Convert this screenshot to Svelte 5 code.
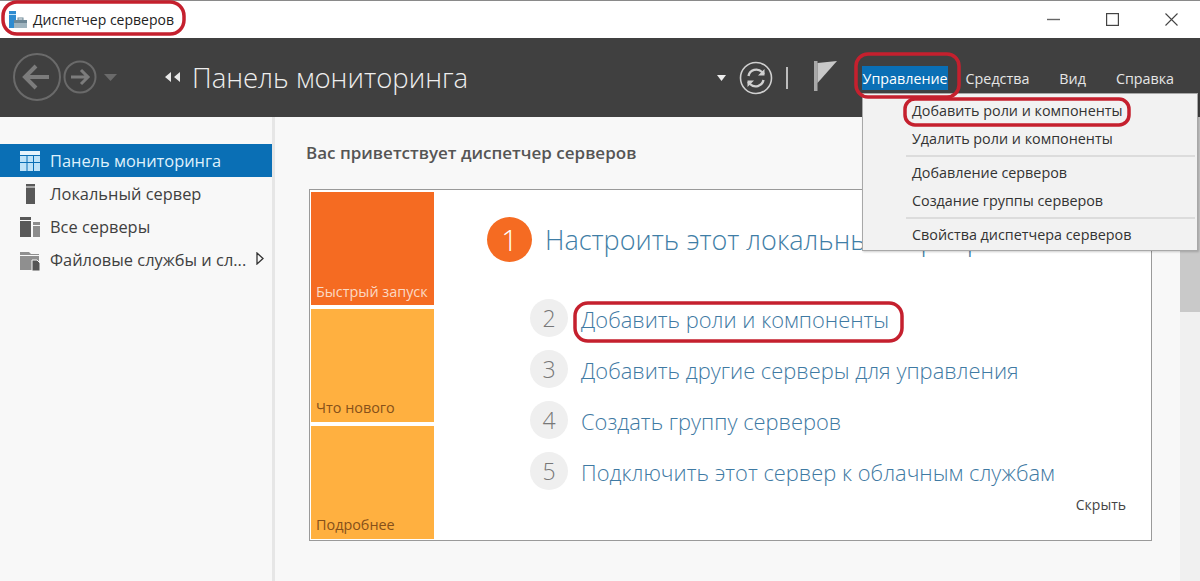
<script>
  const nav = [
    { label: 'Панель мониторинга', icon: 'dash', active: true },
    { label: 'Локальный сервер', icon: 'one' },
    { label: 'Все серверы', icon: 'all' },
    { label: 'Файловые службы и сл...', icon: 'files', more: true }
  ];
  const steps = [
    { n: 2, text: 'Добавить роли и компоненты' },
    { n: 3, text: 'Добавить другие серверы для управления' },
    { n: 4, text: 'Создать группу серверов' },
    { n: 5, text: 'Подключить этот сервер к облачным службам' }
  ];
  const menus = ['Управление', 'Средства', 'Вид', 'Справка'];
</script>

<div class="window">
  <div class="titlebar">
    <svg class="app-icon" width="20" height="20" viewBox="0 0 20 20">
      <rect x="1" y="1" width="7" height="17" fill="#2e8bd0" />
      <rect x="1" y="4" width="7" height="1" fill="#bfe0f5" />
      <rect x="6" y="10" width="13" height="8" fill="#9fb4bf" />
      <rect x="6" y="10" width="13" height="3" fill="#6d8796" />
      <rect x="10" y="8" width="5" height="2" fill="none" stroke="#6d8796" />
    </svg>
    <span class="app-name">Диспетчер серверов</span>
    <div class="win-controls">
      <svg width="13" height="13" viewBox="0 0 13 13"><path d="M0 6.500h13" stroke="#666" stroke-width="1.400" /></svg>
      <svg width="13" height="13" viewBox="0 0 13 13"><rect x="0.600" y="0.600" width="11.800" height="11.800" fill="none" stroke="#444" stroke-width="1.200" /></svg>
      <svg width="13" height="13" viewBox="0 0 13 13"><path d="M0.500 0.500l12 12M12.500 0.500l-12 12" stroke="#444" stroke-width="1.100" /></svg>
    </div>
  </div>

  <header class="toolbar">
    <div class="history">
      <svg width="110" height="50" viewBox="0 0 110 50">
        <circle cx="24" cy="25" r="23" fill="none" stroke="#6a6a6a" stroke-width="2" />
        <path d="M36 25H13M23 14L12 25l11 11" fill="none" stroke="#7c7c7c" stroke-width="4" />
        <circle cx="67" cy="25" r="15.500" fill="none" stroke="#6a6a6a" stroke-width="2" />
        <path d="M58 25h17M68 18l7 7-7 7" fill="none" stroke="#7c7c7c" stroke-width="3" />
        <path d="M91 22h13l-6.500 7z" fill="#6a6a6a" />
      </svg>
    </div>
    <svg class="collapse" width="16" height="10" viewBox="0 0 16 10">
      <path d="M0 5l6-5v10zM9 5l6-5v10z" fill="#e8e8e8" />
    </svg>
    <h1>Панель мониторинга</h1>

    <div class="tools">
      <svg class="drop" width="9" height="6" viewBox="0 0 9 6"><path d="M0 0h9L4.500 6z" fill="#eee" /></svg>
      <svg class="refresh" width="34" height="34" viewBox="0 0 34 34">
        <circle cx="17" cy="17" r="15.500" fill="none" stroke="#d0d0d0" stroke-width="1.600" />
        <path d="M9.500 15a8 8 0 0 1 13.500-4l2 2M24.500 19a8 8 0 0 1-13.500 4l-2-2" fill="none" stroke="#d0d0d0" stroke-width="2.400" />
        <path d="M25.500 8v6.500H19zM8.500 26v-6.500H15z" fill="#d0d0d0" />
      </svg>
      <span class="divider"></span>
      <svg class="flag" width="23" height="31" viewBox="0 0 23 31">
        <rect x="0" y="0" width="3.500" height="30" fill="#a8a8a8" />
        <path d="M3.500 2L23 0L3.500 22z" fill="#c8c8c8" />
      </svg>
    </div>

    <nav class="menubar">
      {#each menus as m, i}
        <span class="menu-item" class:open={i === 0}>{m}</span>
      {/each}
    </nav>
  </header>

  <div class="body">
    <aside class="sidebar">
      {#each nav as item}
        <div class="nav-row" class:active={item.active}>
          <svg class="nav-icon" width="22" height="22" viewBox="0 0 22 22">
            {#if item.icon === 'dash'}
              <rect x="1" y="1" width="20" height="20" fill="#bfe3f8" />
              <path d="M1 5.500h20M1 12.500h20M8 5.500v15.500M14.500 5.500v15.500" stroke="#0a6fb5" stroke-width="1" />
              <rect x="1" y="1" width="20" height="4" fill="#e6f4fc" />
            {:else if item.icon === 'one'}
              <rect x="7" y="1" width="9" height="20" fill="#595959" />
              <rect x="7" y="3.500" width="9" height="1" fill="#f7f7f7" />
            {:else if item.icon === 'all'}
              <rect x="1" y="1" width="11" height="20" fill="#595959" />
              <rect x="1" y="4" width="11" height="1" fill="#f7f7f7" />
              <rect x="14" y="6" width="7" height="15" fill="#8c8c8c" />
              <rect x="14" y="9" width="7" height="1" fill="#f7f7f7" />
            {:else}
              <path d="M1 3h9l2 2h8v16H1z" fill="#8f8f8f" />
              <path d="M1 6.500h19" stroke="#f7f7f7" />
              <path d="M13 11h5l3 3v8h-8z" fill="#555" stroke="#f7f7f7" />
            {/if}
          </svg>
          <span class="nav-label">{item.label}</span>
          {#if item.more}
            <svg class="more" width="8" height="13" viewBox="0 0 8 13"><path d="M1 1l6 5.500-6 5.500z" fill="none" stroke="#333" stroke-width="1.300" /></svg>
          {/if}
        </div>
      {/each}
    </aside>

    <main class="content">
      <h2>Вас приветствует диспетчер серверов</h2>
      <section class="card">
        <div class="tiles">
          <div class="tile first">Быстрый запуск</div>
          <div class="tile second">Что нового</div>
          <div class="tile third">Подробнее</div>
        </div>
        <div class="start">
          <div class="lead">
            <span class="lead-num">1</span>
            <span class="lead-text">Настроить этот локальный сервер</span>
          </div>
          <ul class="steps">
            {#each steps as s}
              <li>
                <span class="num">{s.n}</span>
                <span class="step-text">{s.text}</span>
              </li>
            {/each}
          </ul>
          <div class="hide">Скрыть</div>
        </div>
      </section>
    </main>

    <div class="scrollbar"><div class="thumb"></div></div>
  </div>

  <div class="dropdown">
    <div class="dd-row">Добавить роли и компоненты</div>
    <div class="dd-row">Удалить роли и компоненты</div>
    <div class="dd-sep"></div>
    <div class="dd-row">Добавление серверов</div>
    <div class="dd-row">Создание группы серверов</div>
    <div class="dd-sep"></div>
    <div class="dd-row">Свойства диспетчера серверов</div>
  </div>

  <!-- red marks drawn over the screenshot -->
  <svg class="marks" width="1200" height="581" viewBox="0 0 1200 581">
    <g fill="none" stroke="#c5202e" stroke-width="3.500">
      <rect x="3" y="2" width="181" height="32" rx="14" />
      <rect x="856" y="54" width="103" height="43" rx="12" />
      <rect x="905" y="99" width="224" height="26" rx="10" />
      <rect x="575" y="303" width="327" height="38" rx="13" />
    </g>
  </svg>
</div>

<style>
  :global(body) {
    margin: 0;
    background: #fff;
  }
  .window {
    position: relative;
    width: 1200px;
    height: 581px;
    overflow: hidden;
    display: flex;
    flex-direction: column;
    font-family: "Open Sans", "Noto Sans", sans-serif;
    color: #444;
  }
  .titlebar {
    flex: none;
    border-top: 1px solid #8a8a8a;
    height: 37px;
    display: flex;
    align-items: center;
    padding-left: 8px;
    background: #fff;
  }
  .app-icon {
    margin-right: 5px;
  }
  .app-name {
    font-size: 14px;
    color: #222;
  }
  .win-controls {
    margin-left: auto;
    display: flex;
    gap: 46px;
    padding-right: 22px;
  }
  .toolbar {
    height: 79px;
    flex: none;
    display: flex;
    align-items: center;
    background: #404040;
    padding-left: 13px;
  }
  .history {
    width: 150px;
    display: flex;
    margin-top: -1px;
  }
  .collapse {
    margin-left: 2px;
    margin-top: -2px;
  }
  h1 {
    margin: 0 0 0 11px;
    font-size: 27.500px;
    font-weight: 300;
    color: #eee;
  }
  .tools {
    margin-left: auto;
    display: flex;
    align-items: center;
  }
  .drop {
    margin-right: 13px;
  }
  .divider {
    width: 2px;
    height: 22px;
    margin: 0 26px 0 13px;
    background: #bdbdbd;
  }
  .flag {
    margin-top: -3px;
  }
  .menubar {
    display: flex;
    align-items: center;
    margin-left: 25px;
    padding-right: 26px;
    font-size: 14.300px;
    color: #e6e6e6;
  }
  .menu-item {
    padding: 2px 0;
    height: 24px;
    box-sizing: border-box;
    line-height: 21px;
    white-space: nowrap;
  }
  .menu-item + .menu-item {
    margin-left: 30px;
  }
  .menu-item.open {
    width: 86px;
    box-sizing: border-box;
    padding: 2px 1px;
    margin-right: -12px;
    background: #0a6fb5;
    color: #fff;
  }
  .body {
    flex: 1;
    display: flex;
    min-height: 0;
    background: #f8f8f8;
  }
  .sidebar {
    width: 272px;
    flex: none;
    padding-top: 27px;
    border-right: 3px solid #e6e6e6;
    background: #f8f8f8;
  }
  .nav-row {
    height: 33px;
    display: flex;
    align-items: center;
    padding-left: 19px;
    font-size: 16.400px;
    color: #404040;
  }
  .nav-row.active {
    background: #0a6fb5;
    color: #dff1fc;
  }
  .nav-icon {
    margin-right: 9px;
    flex: none;
  }
  .nav-label {
    white-space: nowrap;
  }
  .more {
    margin-left: 10px;
    margin-top: -3px;
  }
  .content {
    flex: 1;
    min-width: 0;
    padding: 25px 28px 0 31px;
  }
  h2 {
    margin: 0 0 26px;
    font-size: 17px;
    line-height: 21px;
    font-weight: 600;
    color: #555;
    white-space: nowrap;
  }
  .card {
    height: 352px;
    margin-left: 3px;
    box-sizing: border-box;
    display: flex;
    padding: 2px 0 1px 1px;
    border: 1px solid #9a9a9a;
    background: #fff;
  }
  .tiles {
    width: 123px;
    flex: none;
    display: grid;
    grid-template-rows: repeat(3, 1fr);
    gap: 4px;
    font-size: 14.400px;
  }
  .tile {
    display: flex;
    align-items: flex-end;
    padding: 0 0 5px 5px;
    box-sizing: border-box;
    background: #ffb040;
    color: #86501a;
  }
  .tile.first {
    padding-bottom: 4px;
    background: #f56b22;
    color: #fbd9c4;
  }
  .start {
    flex: 1;
    min-width: 0;
    padding-left: 53px;
    padding-right: 25px;
    position: relative;
  }
  .lead {
    display: flex;
    align-items: center;
    margin-top: 25px;
    white-space: nowrap;
  }
  .lead-num {
    width: 45px;
    height: 45px;
    flex: none;
    border-radius: 50%;
    background: #f56b22;
    color: #fff;
    font-size: 29px;
    font-weight: 300;
    line-height: 45px;
    text-align: center;
  }
  .lead-text {
    margin-left: 13px;
    font-size: 27px;
    font-weight: 300;
    color: #3f7ea6;
  }
  .steps {
    list-style: none;
    margin: 37px 0 0 43px;
    padding: 0;
    display: flex;
    flex-direction: column;
    gap: 13px;
  }
  .steps li {
    display: flex;
    align-items: center;
    height: 38px;
    white-space: nowrap;
  }
  .num {
    width: 38px;
    height: 38px;
    flex: none;
    border-radius: 50%;
    background: #efefef;
    color: #777;
    font-size: 23px;
    font-weight: 300;
    line-height: 38px;
    text-align: center;
  }
  .step-text {
    margin-left: 13px;
    margin-top: 2px;
    font-size: 21.900px;
    font-weight: 300;
    color: #3f7aa3;
  }
  .hide {
    margin-top: 5px;
    text-align: right;
    font-size: 14px;
    color: #444;
  }
  .scrollbar {
    width: 20px;
    flex: none;
    background: #f0f0f0;
  }
  .thumb {
    height: 195px;
    background: #c9c9c9;
  }
  .dropdown {
    position: absolute;
    left: 862px;
    top: 93px;
    width: 336px;
    height: 158px;
    box-sizing: border-box;
    padding: 3px 2px 0 43px;
    border: 1px solid #a8a8a8;
    background: #f2f2f2;
    box-shadow: 1px 1px 2px rgba(0, 0, 0, 0.2);
    font-size: 14.350px;
    color: #333;
  }
  .dd-row {
    height: 28px;
    line-height: 27px;
    padding-left: 5px;
    margin-left: 1px;
    white-space: nowrap;
  }
  .dd-sep {
    height: 2px;
    margin: 2px 0 2px;
    background: #dcdcdc;
  }
  .marks {
    position: absolute;
    left: 0;
    top: 0;
    pointer-events: none;
  }
</style>
